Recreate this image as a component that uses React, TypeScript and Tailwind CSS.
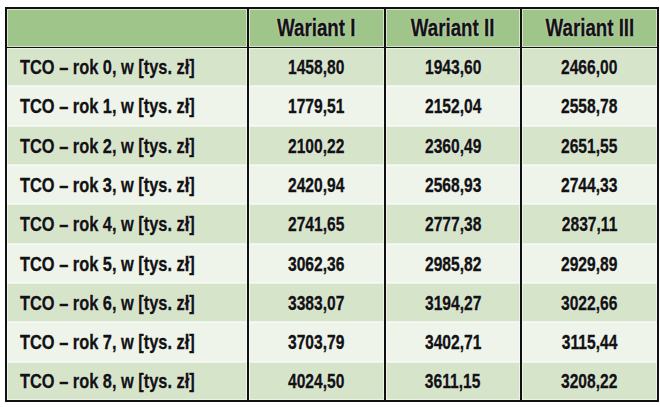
const rows = [
  ['1458,80', '1943,60', '2466,00'],
  ['1779,51', '2152,04', '2558,78'],
  ['2100,22', '2360,49', '2651,55'],
  ['2420,94', '2568,93', '2744,33'],
  ['2741,65', '2777,38', '2837,11'],
  ['3062,36', '2985,82', '2929,89'],
  ['3383,07', '3194,27', '3022,66'],
  ['3703,79', '3402,71', '3115,44'],
  ['4024,50', '3611,15', '3208,22'],
];

const heights = ['h-[39px]', 'h-[40px]', 'h-[39px]', 'h-[39px]', 'h-[40px]', 'h-[39px]', 'h-[39px]', 'h-[40px]', 'h-[39px]'];

const cell = 'shadow-[inset_0_0_0_1px_rgba(255,255,255,0.55)]';
// condensed look: Liberation Sans squeezed horizontally
const narrow = 'inline-block scale-x-[0.78] [text-shadow:0_0_2px_#fff] [-webkit-text-stroke:0.35px_#121212]';

export default function App() {
  return (
    <div
      className="w-[660px] h-[407px] bg-white pt-[7px] pl-[5px] text-[#121212]"
      style={{ fontFamily: '"Liberation Sans", Arial, sans-serif' }}
    >
      <table className="w-[652px] table-fixed border-collapse border-2 border-[#111] font-bold">
        <colgroup>
          <col className="w-[242px]" />
          <col className="w-[137px]" />
          <col className="w-[136px]" />
          <col className="w-[137px]" />
        </colgroup>
        <thead>
          <tr className="h-[39px] bg-[#a0c58b] border-b border-[#111]">
            <th className={cell}></th>
            {['Wariant I', 'Wariant II', 'Wariant III'].map((h) => (
              <th key={h} className={`${cell} border-l-2 border-[#111] text-center text-[24px] whitespace-nowrap`}>
                <span className={narrow}>{h}</span>
              </th>
            ))}
          </tr>
        </thead>
        <tbody>
          {rows.map((r, i) => (
            <tr key={i} className={`${heights[i]} ${i % 2 === 0 ? 'bg-[#d6e4ca]' : 'bg-[#eef4ea]'}`}>
              <td className={`${cell} pl-[13px] text-[21px] whitespace-nowrap`}>
                <span className={`${narrow} origin-left`}>TCO – rok {i}, w [tys. zł]</span>
              </td>
              {r.map((v, j) => (
                <td key={j} className={`${cell} border-l-2 border-[#111] text-center text-[20px]`}>
                  <span className={narrow}>{v}</span>
                </td>
              ))}
            </tr>
          ))}
        </tbody>
      </table>
    </div>
  );
}
